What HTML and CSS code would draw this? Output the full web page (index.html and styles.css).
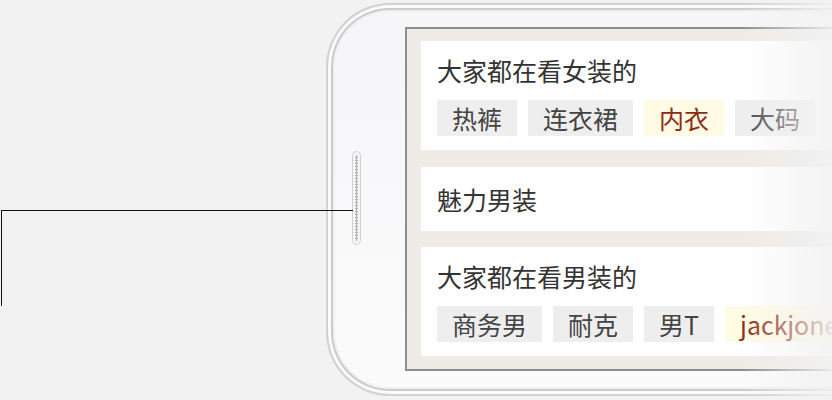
FILE: index.html
```html
<!DOCTYPE html>
<html lang="zh-CN">
<head>
    <meta charset="UTF-8">
    <meta name="viewport" content="width=device-width, initial-scale=1.0">
    <title>手机导购</title>
    <link rel="stylesheet" href="styles.css">
</head>
<body>
    <div class="stage">
        <!-- pointer line to the side key -->
        <div class="callout"></div>

        <div class="phone">
            <div class="side-key"></div>
            <div class="screen">
                <div class="card">
                    <div class="card-title">大家都在看女装的</div>
                    <div class="tags">
                        <span class="tag">热裤</span>
                        <span class="tag">连衣裙</span>
                        <span class="tag hot">内衣</span>
                        <span class="tag">大码</span>
                    </div>
                </div>
                <div class="card single">
                    <div class="card-title">魅力男装</div>
                </div>
                <div class="card">
                    <div class="card-title">大家都在看男装的</div>
                    <div class="tags">
                        <span class="tag">商务男</span>
                        <span class="tag">耐克</span>
                        <span class="tag">男T</span>
                        <span class="tag hot">jackjones</span>
                    </div>
                </div>
            </div>
        </div>

        <div class="fade"></div>
    </div>
</body>
</html>
```

FILE: styles.css
```css
body {
    margin: 0;
    background-color: #f2f2f2;
    font-family: "Noto Sans CJK SC", "Noto Sans", sans-serif;
    overflow: hidden;
}

.stage {
    position: relative;
    width: 832px;
    height: 400px;
    overflow: hidden;
}

.callout {
    position: absolute;
    left: 1px;
    top: 210px;
    width: 351px;
    height: 95px;
    border-top: 1px solid #111;
    border-left: 1px solid #111;
    z-index: 2;
}

.phone {
    display: flex;
    align-items: flex-start;
    box-sizing: border-box;
    width: 640px;
    height: 393px;
    margin: 3px 0 0 326px;
    padding: 22px 0 0 24px;
    border: 2px solid #d2d2d4;
    border-right: none;
    border-radius: 64px 0 0 64px;
    background: linear-gradient(to bottom, #f6f6f8, #fbfbfc);
    box-shadow: inset 0 0 0 3px #fbfbfb, inset 0 0 0 5px #cbcbcd, inset 0 0 0 7px #f0f0f2;
}

.side-key {
    flex: none;
    width: 7px;
    height: 86px;
    margin-top: 124px;
    margin-right: 44px;
    border: 1px solid #d2d2d2;
    border-radius: 5px;
    background-color: #f4f4f4;
    background-image: radial-gradient(circle, #b0b0b0 1px, transparent 1.4px);
    background-size: 7px 3px;
    background-position: 0 4px;
    background-repeat: repeat-y;
    background-clip: content-box;
    padding: 3px 0;
}

.screen {
    flex: 1;
    height: 344px;
    box-sizing: border-box;
    padding: 12px 0 0 14px;
    border: 2px solid #8e8e8e;
    border-right: none;
    background-color: #efebe7;
}

.card {
    background-color: #fff;
    padding: 11px 0 14px 16px;
    margin-bottom: 16px;
}

.card:first-child {
    margin-bottom: 17px;
}

.card.single {
    padding-top: 14px;
}

.card-title {
    height: 36px;
    line-height: 36px;
    font-size: 25px;
    color: #333;
}

.tags {
    display: flex;
    gap: 11px;
    margin-top: 12px;
}

.tag {
    height: 36px;
    line-height: 36px;
    padding: 0 15px;
    font-size: 25px;
    color: #444;
    background-color: #eeeeee;
    white-space: nowrap;
}

.tag.hot {
    color: #8c2c12;
    background-color: #fffbe4;
}

.fade {
    position: absolute;
    top: 0;
    right: 0;
    width: 90px;
    height: 400px;
    background: linear-gradient(to right, rgba(242, 242, 242, 0), rgba(242, 242, 242, 0.9));
    z-index: 3;
}
```
